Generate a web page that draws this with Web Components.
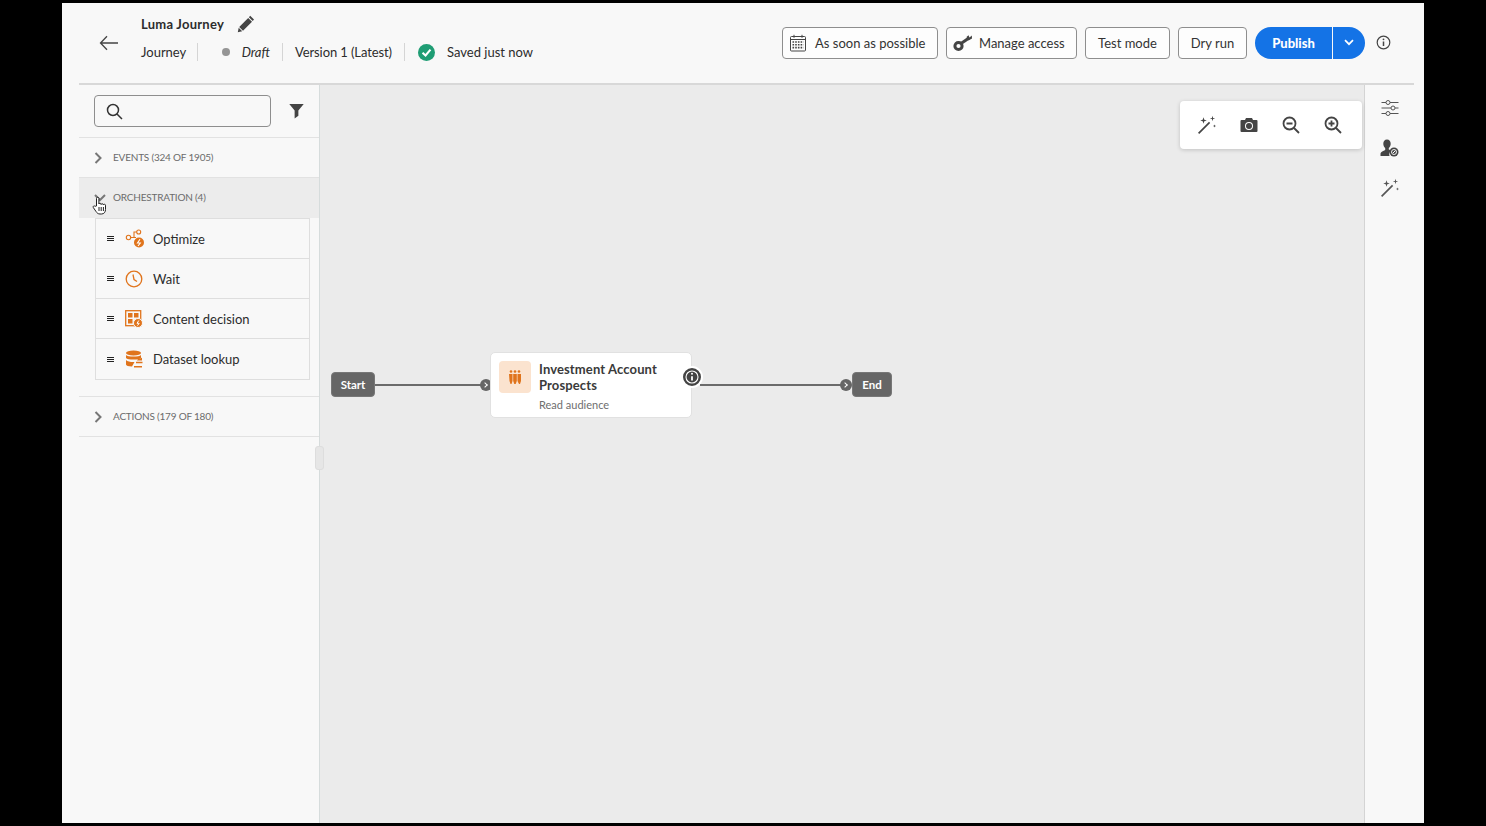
<!DOCTYPE html>
<html lang="en"><head><meta charset="utf-8"><title>Luma Journey</title>
<style>
html,body{margin:0;height:100%;background:#000;overflow:hidden}
body{font-family:Lato,"Open Sans",sans-serif;color:#2c2c2c}
</style></head><body>
<app-shell>
  <journey-header></journey-header>
  <palette-panel></palette-panel>
  <journey-canvas></journey-canvas>
  <right-rail></right-rail>
</app-shell>
<script>
const I={
 back:'<svg width="20" height="16" viewBox="0 0 20 16" fill="none" stroke="#444" stroke-width="1.3"><path d="M1.5 8H19M8 1.2 1.5 8 8 14.8"/></svg>',
 pencil:'<svg width="18" height="18" viewBox="0 0 18 18" fill="#444"><path d="M13.200 .8 17 4.600 15.700 6 11.900 2.200ZM11.200 2.900 15 6.700 6 15.700 2.200 11.900ZM1.700 12.700 5.200 16.300 .8 17.200Z"/></svg>',
 check:'<svg width="17" height="17" viewBox="0 0 18 18"><circle cx="9" cy="9" r="9" fill="#1f9d74"/><path d="M4.800 9.200 8 12.200 13.200 6" fill="none" stroke="#fff" stroke-width="2.200"/></svg>',
 cal:'<svg width="18" height="18" viewBox="0 0 18 18" fill="none" stroke="#444"><rect x="1.500" y="2.500" width="15" height="14.500" rx="1"/><path d="M1.500 5.500h15M5 .8v3M13 .8v3"/><path stroke-width="1.600" stroke-dasharray="1.600 1.100" d="M3.500 8h11M3.500 10.800h11M3.500 13.600h11"/></svg>',
 key:'<svg width="20" height="18" viewBox="0 0 20 18"><circle cx="5.500" cy="12" r="3.600" fill="none" stroke="#444" stroke-width="3"/><path d="M8 9.500 16 4" stroke="#444" stroke-width="3" fill="none"/><path fill="#444" d="M13.500 3 15.500 1.200 16.500 3.500 18.800 1.500 19 4.500 15.500 6.500Z"/></svg>',
 chevW:'<svg width="10" height="7" viewBox="0 0 10 7" fill="none" stroke="#fff" stroke-width="1.700"><path d="M1 1.200 5 5.200 9 1.200"/></svg>',
 info:'<svg width="15" height="15" viewBox="0 0 15 15" fill="none" stroke="#444" stroke-width="1.200"><circle cx="7.500" cy="7.500" r="6.300"/><path stroke-width="1.500" d="M7.500 6.500v4.500"/><circle cx="7.500" cy="4.300" r=".9" fill="#444" stroke="none"/></svg>',
 search:'<svg width="17" height="17" viewBox="0 0 17 17" fill="none" stroke="#333" stroke-width="1.500"><circle cx="7" cy="7" r="5.500"/><path d="M11 11l5 5"/></svg>',
 filter:'<svg width="16" height="16" viewBox="0 0 16 16" fill="#444"><path d="M.3 .5h15.400L10 7.500V13l-4 3V7.500Z"/></svg>',
 chevR:'<svg width="8" height="12" viewBox="0 0 8 12" fill="none" stroke="#777" stroke-width="2"><path d="M1.500 1 6.500 6 1.500 11"/></svg>',
 chevD:'<svg width="12" height="8" viewBox="0 0 12 8" fill="none" stroke="#777" stroke-width="2"><path d="M1 1 6 6 11 1"/></svg>',
 optimize:'<svg width="20" height="20" viewBox="0 0 20 20" fill="none" stroke="#e0741c" stroke-width="1.100"><circle cx="3.500" cy="8.500" r="2.200"/><circle cx="13.700" cy="3" r="2"/><path d="M5.700 8.500H9V3h2.700M9 8.500h2"/><circle cx="14" cy="13.500" r="5" fill="#e0741c" stroke="none"/><path d="M15 10.300 12.500 14h2.800L13 17" stroke="#fff" stroke-width="1.100"/></svg>',
 clock:'<svg width="18" height="18" viewBox="0 0 18 18" fill="none" stroke="#e0741c" stroke-width="1.300"><circle cx="9" cy="9" r="7.800"/><path d="M8 4.500 9 9.500 12 11.500"/></svg>',
 decision:'<svg width="18" height="18" viewBox="0 0 18 18"><rect x=".7" y=".7" width="15" height="15" fill="none" stroke="#e0741c" stroke-width="1.300"/><path fill="#e0741c" d="M3 3h4.500v4.500H3zM9 3h4.500v4.500H9zM3 9h4.500v4.500H3z"/><circle cx="13" cy="13" r="4.500" fill="#e0741c" stroke="#f8f8f8"/><path d="M13.800 10.500 12 13.300h2.200L12.500 15.600" fill="none" stroke="#fff"/></svg>',
 dataset:'<svg width="18" height="18" viewBox="0 0 18 18" fill="#e0741c"><ellipse cx="8.500" cy="3" rx="7.500" ry="2.600"/><path d="M1 5c1.500 2 13.500 2 15 0v3c-1.500 2-13.500 2-15 0zM1 10c1.500 1.800 6 2.300 8.500 2L7 16.500C3.500 16.500 1 15.500 1 14.500z"/><path d="M11 12.500h6.500M9 16.700h8" stroke="#e0741c" stroke-width="1.500"/><path d="M13 9c2-.5 3.600-.8 4-1.500v3h-5z"/></svg>',
 wand:'<svg width="20" height="20" viewBox="0 0 20 20" fill="#444"><path d="M1 17.800 12 6.800l1.200 1.200-11 11z"/><path d="M6.500 2.200 7.300 4.700 9.800 5.500 7.300 6.300 6.500 8.800 5.700 6.300 3.200 5.500 5.700 4.700zM15.500 .8 16.100 2.900 18.200 3.500 16.100 4.100 15.500 6.200 14.900 4.100 12.800 3.500 14.900 2.900zM17.500 9.500l.4 1.100 1.100.4-1.100.4-.4 1.100-.4-1.100-1.100-.4 1.100-.4z"/></svg>',
 camera:'<svg width="18" height="16" viewBox="0 0 18 16"><path fill="#444" fill-rule="evenodd" d="M1.500 3H5L6 1h6l1 2h3.500A1 1 0 0 1 17.500 4v10a1 1 0 0 1-1 1h-15a1 1 0 0 1-1-1V4a1 1 0 0 1 1-1ZM9 5a4 4 0 1 0 0 8 4 4 0 0 0 0-8Z"/><circle cx="9" cy="9" r="3" fill="#444"/></svg>',
 zoomOut:'<svg width="18" height="18" viewBox="0 0 18 18" fill="none" stroke="#444" stroke-width="1.800"><circle cx="7.500" cy="7.500" r="6"/><path d="M12 12l5 5M4.500 7.500h6"/></svg>',
 zoomIn:'<svg width="18" height="18" viewBox="0 0 18 18" fill="none" stroke="#444" stroke-width="1.800"><circle cx="7.500" cy="7.500" r="6"/><path d="M12 12l5 5M4.500 7.500h6M7.500 4.500v6"/></svg>',
 sliders:'<svg width="18" height="16" viewBox="0 0 18 16" fill="none" stroke="#555" stroke-width="1"><path d="M.5 2.500h4.500M9 2.500h8.500M.5 8h9.500M14 8h3.500M.5 13.500h4.500M9 13.500h8.500"/><circle cx="7" cy="2.500" r="2"/><circle cx="12" cy="8" r="2"/><circle cx="7" cy="13.500" r="2"/></svg>',
 user:'<svg width="19" height="18" viewBox="0 0 19 18"><path fill="#444" d="M7 .5c2.300 0 3.700 1.800 3.700 4.200 0 1.800-.8 3.400-1.900 4.300v1.500c1 .3 1.800.7 2.400 1.100a5 5 0 0 0-1.700 5.400H.5v-2.500c0-1.500 3-2.800 4.700-3.500V9C4.100 8.100 3.300 6.500 3.300 4.700 3.300 2.300 4.700.5 7 .5Z"/><circle cx="14" cy="13" r="4.500" fill="#444"/><circle cx="14" cy="13" r="2.500" fill="none" stroke="#fff" stroke-width=".9"/><path d="M13 14l2.300-2.300" stroke="#fff"/></svg>',
 people:'<svg width="16" height="16" viewBox="0 0 16 16" fill="#e0741c"><circle cx="4" cy="2.500" r="1.300"/><circle cx="8" cy="2.500" r="1.300"/><circle cx="12" cy="2.500" r="1.300"/><path d="M2 5h3.500v7l-1 3h-1l-1-3zM6.200 5h3.600v7l-1.100 3H7.300l-1.100-3zM10.500 5H14v7l-1 3h-1l-1.500-3z"/></svg>',
 hand:'<svg width="16" height="19" viewBox="0 0 16 19"><path fill="#fff" stroke="#222" stroke-width="1" d="M4.500 10V2.500a1.200 1.200 0 0 1 2.400 0V8c0-1 2.200-1 2.200 0v.5c0-1 2.200-1 2.200 0V9c0-1 2.200-1 2.200.2v4.300c0 2.500-1.400 4.500-4 4.500H8c-2 0-3-1-4-2.500L1.300 11.500c-.7-1.200.9-2.200 1.800-1.200z"/><path stroke="#222" d="M7 11v4M9.200 11v4M11.400 11v4"/></svg>',
 infoDark:'<svg width="14" height="14" viewBox="0 0 14 14" fill="none" stroke="#fff" stroke-width="1.100"><circle cx="7" cy="7" r="6"/><path stroke-width="1.800" d="M7 6.200v4.300"/><circle cx="7" cy="3.800" r="1" fill="#fff" stroke="none"/></svg>'
};
class Base extends HTMLElement{
  constructor(){super();this.attachShadow({mode:'open'});}
  render(h){this.shadowRoot.innerHTML=h;}
}
customElements.define('app-shell',class extends Base{constructor(){super();this.render(`<style>
:host{display:grid;box-sizing:border-box;width:1362px;height:820px;margin:3px 0 0 62px;padding:0 10px 0 17px;background:#f8f8f8;
grid-template-columns:241px 1fr 50px;grid-template-rows:82px 1fr;overflow:hidden;font-family:Lato,"Open Sans",sans-serif}
::slotted(journey-header){grid-column:1/4}
</style><slot></slot>`);}});
customElements.define('tool-button',class extends Base{connectedCallback(){const ic=this.getAttribute('icon');this.render(`<style>
:host{display:inline-flex;align-items:center;justify-content:center;gap:var(--g,8px);box-sizing:border-box;height:32px;padding:1px 0 0;width:var(--w);border:1px solid #8e8e8e;border-radius:4px;font-size:13px;color:#333;background:#fdfdfd;white-space:nowrap}
:host([icon]){justify-content:flex-start;padding-left:var(--p,6px)}
svg{display:block}
</style>${ic?I[ic]:''}<slot></slot>`);}});
customElements.define('journey-header',class extends Base{constructor(){super();this.render(`<style>
:host{display:flex;align-items:stretch;box-sizing:border-box;height:82px;border-bottom:2px solid #d8d8d8;padding-right:23px;font-size:13px;color:#2c2c2c}
.back{width:62px;box-sizing:border-box;padding:32px 0 0 20px}
.col{padding-top:12px}
.title{display:flex;align-items:center;height:17px;font-weight:700;margin-bottom:11px}
.title span{width:96px;letter-spacing:.25px}
.title svg{display:block}
.meta{display:flex;align-items:center;height:18px}
.meta>span{display:flex;align-items:center;height:18px;white-space:nowrap}
.sep{border-left:1px solid #d5d5d5}
.dot{width:8px;height:8px;border-radius:50%;background:#959595;margin-right:12px}
i{font-style:italic}
.sp{flex:1}
.actions{display:flex;align-items:center;gap:8px;padding-top:3px;height:76px;box-sizing:border-box}
.pub{display:flex;height:32px;color:#fff;font-weight:700;font-size:13px;margin-right:3px}
.pub b{display:flex;align-items:center;justify-content:center;width:77px;background:#1473e6;border-radius:16px 0 0 16px}
.pub span{display:flex;align-items:center;justify-content:center;width:32px;margin-left:1px;background:#1473e6;border-radius:0 16px 16px 0}
svg{display:block}
</style>
<div class="back">${I.back}</div>
<div class="col"><div class="title"><span>Luma Journey</span>${I.pencil}</div>
<div class="meta"><span style="width:56px">Journey</span><span class="sep" style="padding-left:24px;width:48px;margin-right:12px"><span class="dot"></span><i>Draft</i></span><span class="sep" style="padding-left:12px;width:109px;letter-spacing:-.1px">Version 1 (Latest)</span><span class="sep" style="padding-left:13px;gap:12px">${I.check}Saved just now</span></div></div>
<div class="sp"></div>
<div class="actions"><tool-button icon="cal" style="--w:156px">As soon as possible</tool-button><tool-button icon="key" style="--w:131px;--p:6px;--g:6px">Manage access</tool-button><tool-button style="--w:85px">Test mode</tool-button><tool-button style="--w:69px">Dry run</tool-button>
<div class="pub"><b>Publish</b><span>${I.chevW}</span></div>${I.info}</div>`);}});
customElements.define('palette-item',class extends Base{connectedCallback(){this.render(`<style>
:host{display:flex;align-items:center;box-sizing:border-box;height:40px;padding-left:11px;border-bottom:1px solid #dedede;font-size:13px;color:#2c2c2c}
:host(:last-child){border-bottom:0}
.g{width:7px;height:3px;border-top:1px solid #222;border-bottom:1px solid #222;position:relative;margin-right:11px}
.g:after{content:"";position:absolute;left:0;right:0;top:1px;border-top:1px solid #222}
.ic{width:22px;margin-right:6px;display:flex}
svg{display:block}
</style><span class="g"></span><span class="ic">${I[this.getAttribute('icon')]}</span><slot></slot>`);}});
customElements.define('palette-section',class extends Base{connectedCallback(){const o=this.hasAttribute('open');this.render(`<style>
:host{display:block;${o?'border-bottom:1px solid #e2e2e2;':''}}
.h{display:flex;align-items:center;box-sizing:border-box;height:40px;padding:0 0 0 15px;font-size:10px;letter-spacing:-.2px;color:#6b6b6b;border-bottom:1px solid #e2e2e2;${o?'background:#ececec;border-bottom:0;':''}}
.h span.t{position:relative;top:-1px}
.a{width:19px;display:flex}
.b{display:${o?'block':'none'};margin:0 9px 16px 16px;border:1px solid #dedede}
svg{display:block}
</style><div class="h"><span class="a">${o?I.chevD:I.chevR}</span><span class="t">${this.getAttribute('label')}</span></div><div class="b"><slot></slot></div>`);}});
customElements.define('palette-panel',class extends Base{constructor(){super();this.render(`<style>
:host{display:block;position:relative;z-index:1;box-sizing:border-box;border-right:1px solid #d6dcdc;height:100%}
.s{display:flex;align-items:center;box-sizing:border-box;height:53px;padding:0 15px;border-bottom:1px solid #e2e2e2}
.in{flex:none;width:177px;height:32px;box-sizing:border-box;border:1px solid #8e8e8e;border-radius:4px;display:flex;align-items:center;padding-left:11px;margin-right:18px}
svg{display:block}
.grip{position:absolute;right:-5px;top:361px;width:9px;height:24px;background:#e6e6e6;border:1px solid #ddd;border-radius:3px;box-sizing:border-box}
.cur{position:absolute;left:13px;top:111px}
</style><div class="s"><div class="in">${I.search}</div>${I.filter}</div>
<palette-section label="EVENTS (324 OF 1905)"></palette-section>
<palette-section open label="ORCHESTRATION (4)">
<palette-item icon="optimize">Optimize</palette-item><palette-item icon="clock">Wait</palette-item><palette-item icon="decision">Content decision</palette-item><palette-item icon="dataset">Dataset lookup</palette-item>
</palette-section>
<palette-section label="ACTIONS (179 OF 180)"></palette-section>
<span class="grip"></span><span class="cur">${I.hand}</span>`);}});
customElements.define('journey-canvas',class extends Base{constructor(){super();this.render(`<style>
:host{display:block;position:relative;background:#ebebeb;height:100%;font-size:12px}
.tb{position:absolute;top:16px;right:2px;width:182px;height:48px;box-sizing:border-box;background:#fff;border-radius:4px;box-shadow:0 1px 4px rgba(0,0,0,.18);display:flex;align-items:center;padding-left:6px}
.tb span{width:42px;display:flex;justify-content:center}
svg{display:block}
.term{position:absolute;top:287px;height:25px;box-sizing:border-box;background:#666;color:#fff;border:1px solid #777;border-radius:4px;font-weight:700;display:flex;align-items:center;justify-content:center;font-size:11.500px}
.ln{position:absolute;top:299px;height:2px;background:#6b6b6b}
.port{position:absolute;top:294px;width:12px;height:12px;border-radius:50%;background:#666;display:flex;align-items:center;justify-content:center}
.port:after{content:"";width:3px;height:3px;border-top:1.200px solid #fff;border-right:1.200px solid #fff;transform:rotate(45deg);margin-left:-2px}
.node{position:absolute;left:170px;top:267px;width:202px;height:66px;box-sizing:border-box;background:#fff;border:1px solid #e1e1e1;border-radius:5px;display:flex;padding:8px 8px}
.ico{flex:none;width:32px;height:32px;background:#fbe3cf;border-radius:4px;display:flex;align-items:center;justify-content:center;margin-right:8px}
.t{font-weight:700;font-size:13px;line-height:16px;color:#3a3a3a;letter-spacing:.12px}
.sub{font-size:11px;color:#6e6e6e;margin-top:5px}
.badge{position:absolute;left:361px;top:281px;width:18px;height:18px;background:#444;border:2px solid #fff;border-radius:50%;display:flex;align-items:center;justify-content:center}
</style>
<div class="tb"><span>${I.wand}</span><span>${I.camera}</span><span>${I.zoomOut}</span><span>${I.zoomIn}</span></div>
<div class="term" style="left:11px;width:44px">Start</div>
<div class="ln" style="left:55px;width:108px"></div><div class="port" style="left:160px"></div>
<div class="node"><div class="ico">${I.people}</div><div><div class="t">Investment Account<br>Prospects</div><div class="sub">Read audience</div></div></div>
<div class="badge">${I.infoDark}</div>
<div class="ln" style="left:380px;width:142px"></div><div class="port" style="left:520px"></div>
<div class="term" style="left:532px;width:40px">End</div>`);}});
customElements.define('right-rail',class extends Base{constructor(){super();this.render(`<style>
:host{display:flex;flex-direction:column;align-items:center;gap:20px;box-sizing:border-box;border-left:1px solid #d4d4d4;padding-top:13px;height:100%}
span{height:20px;display:flex;align-items:center}
</style><span>${I.sliders}</span><span>${I.user}</span><span>${I.wand.replace('#444','#555')}</span>`);}});
</script>
</body></html>
